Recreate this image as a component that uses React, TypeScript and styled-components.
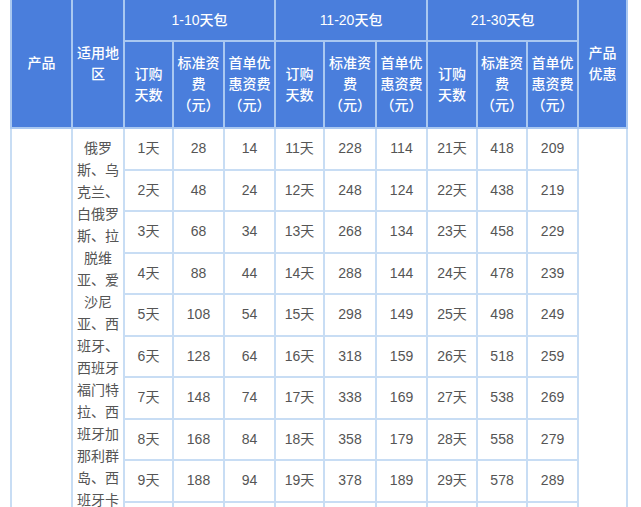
import React from "react";
import styled, { createGlobalStyle } from "styled-components";

const Global = createGlobalStyle`
  html, body { margin: 0; padding: 0; background: #ffffff; }
  body { font-family: "Liberation Sans", "Noto Sans CJK SC", sans-serif; overflow: hidden; }
`;

const Page = styled.div`
  width: 641px;
  height: 507px;
  overflow: hidden;
  padding-left: 10px;
  box-sizing: border-box;
`;

const Table = styled.table`
  border-collapse: collapse;
  table-layout: fixed;
  width: 616px;
  margin-top: -2px;
`;

const HeadCell = styled.th<{ $h?: number }>`
  background: #4a7edc;
  color: #ffffff;
  font-size: 14px;
  font-weight: 500;
  line-height: 21px;
  text-align: center;
  vertical-align: middle;
  padding: 0 2px;
  border: 2px solid #a9c8f1;
  height: ${(p) => (p.$h ? `${p.$h}px` : "auto")};
  box-sizing: border-box;
`;

const GroupCell = styled(HeadCell)`
  font-weight: 500;
`;

const BodyRow = styled.tr`
  height: 41.5px;
`;

const Cell = styled.td`
  color: #555555;
  font-size: 14px;
  line-height: 21px;
  text-align: center;
  vertical-align: middle;
  padding: 0 2px;
  border: 2px solid #c8ddf4;
  background: #ffffff;
`;

const SpanCell = styled(Cell)`
  vertical-align: top;
  padding: 8px 3px 0;
`;

const RegionText = styled.div`
  line-height: 22px;
  height: 400px;
  overflow: hidden;
  word-break: break-all;
`;

const cols = [61, 52, 49, 51, 51, 49, 52, 51, 50, 50, 51, 49];

const groups = [
  { label: "1-10天包", start: 1, std: [28, 48, 68, 88, 108, 128, 148, 168, 188, 208], first: [14, 24, 34, 44, 54, 64, 74, 84, 94, 104] },
  { label: "11-20天包", start: 11, std: [228, 248, 268, 288, 298, 318, 338, 358, 378, 398], first: [114, 124, 134, 144, 149, 159, 169, 179, 189, 199] },
  { label: "21-30天包", start: 21, std: [418, 438, 458, 478, 498, 518, 538, 558, 578, 598], first: [209, 219, 229, 239, 249, 259, 269, 279, 289, 299] },
];

const region =
  "俄罗斯、乌克兰、白俄罗斯、拉脱维亚、爱沙尼亚、西班牙、西班牙福门特拉、西班牙加那利群岛、西班牙卡布雷拉岛";

export default function App() {
  return (
    <>
      <Global />
      <Page>
        <Table>
          <colgroup>
            {cols.map((w, i) => (
              <col key={i} style={{ width: w }} />
            ))}
          </colgroup>
          <thead>
            <tr>
              <HeadCell rowSpan={2}>产品</HeadCell>
              <HeadCell rowSpan={2}>适用地区</HeadCell>
              {groups.map((g) => (
                <GroupCell key={g.label} colSpan={3} $h={42}>
                  {g.label}
                </GroupCell>
              ))}
              <HeadCell rowSpan={2}>
                产品
                <br />
                优惠
              </HeadCell>
            </tr>
            <tr>
              {groups.map((g) => (
                <React.Fragment key={g.label}>
                  <HeadCell $h={87}>
                    订购
                    <br />
                    天数
                  </HeadCell>
                  <HeadCell $h={87}>标准资费（元）</HeadCell>
                  <HeadCell $h={87}>首单优惠资费（元）</HeadCell>
                </React.Fragment>
              ))}
            </tr>
          </thead>
          <tbody>
            {Array.from({ length: 10 }).map((_, r) => (
              <BodyRow key={r}>
                {r === 0 && (
                  <>
                    <Cell rowSpan={10} />
                    <SpanCell rowSpan={10}>
                      <RegionText>{region}</RegionText>
                    </SpanCell>
                  </>
                )}
                {groups.map((g) => (
                  <React.Fragment key={g.label}>
                    <Cell>{g.start + r}天</Cell>
                    <Cell>{g.std[r]}</Cell>
                    <Cell>{g.first[r]}</Cell>
                  </React.Fragment>
                ))}
                {r === 0 && <Cell rowSpan={10} />}
              </BodyRow>
            ))}
          </tbody>
        </Table>
      </Page>
    </>
  );
}
